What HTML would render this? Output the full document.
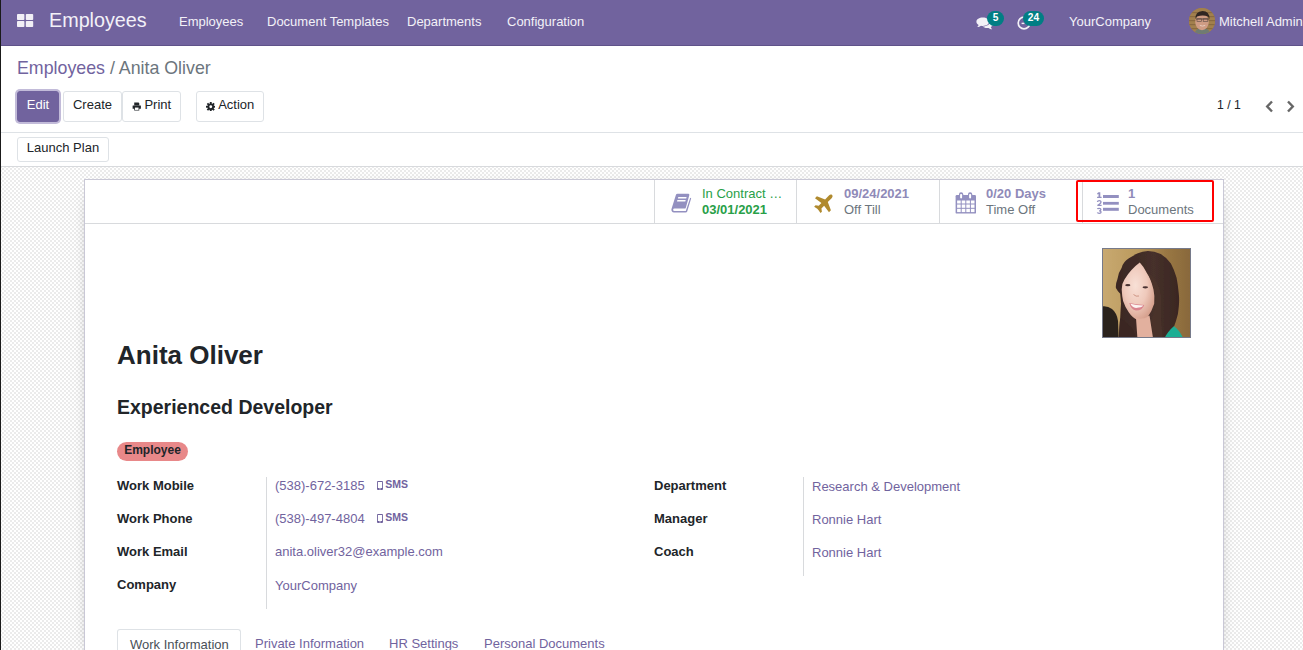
<!DOCTYPE html>
<html><head><meta charset="utf-8">
<style>
*{box-sizing:border-box;margin:0;padding:0}
html,body{width:1303px;height:650px;overflow:hidden;background:#fff}
body{font-family:"Liberation Sans",sans-serif;font-size:13px;color:#212529;position:relative}
.abs{position:absolute;white-space:nowrap}
#lb{position:absolute;left:0;top:0;width:1px;height:650px;background:#1a1a1a;z-index:50}
#nav{position:absolute;left:0;top:0;width:1303px;height:46px;background:#71639e;border-bottom:1px solid #5f5289}
#nav .t{color:#f3f1f8;position:absolute;white-space:nowrap}
#cp{position:absolute;left:0;top:46px;width:1303px;height:87px;background:#fff;border-bottom:1px solid #dee2e6}
.btn{position:absolute;height:31px;border:1px solid #dee2e6;border-radius:3px;background:#fff;color:#212529;font-size:13px;line-height:26.5px;text-align:center;white-space:nowrap}
#sb{position:absolute;left:0;top:133px;width:1303px;height:34px;background:#fff;border-bottom:1px solid #d8dadd}
#bg{position:absolute;left:0;top:167px;width:1303px;height:483px;
 background-color:#fff;
 background-image:conic-gradient(#ebebeb 25%,#fff 25% 50%,#ebebeb 50% 75%,#fff 75%);
 background-size:4px 4px;background-position:0 1px}
#sheet{position:absolute;left:84px;top:179px;width:1140px;height:480px;background:#fff;border:1px solid #c9c8d6;box-shadow:0 5px 20px -15px #000}
#bbox{position:absolute;left:0;top:0;width:1138px;height:44px;border-bottom:1px solid #d8dadd}
.stat{position:absolute;top:0;height:43px;border-left:1px solid #d8dadd}
.stat .v{position:absolute;font-weight:bold;color:#8f8ab8;font-size:13px;white-space:nowrap}
.stat .l{position:absolute;color:#6c757d;font-size:13px;white-space:nowrap}
.lbl{position:absolute;font-weight:bold;color:#212529;font-size:13px;white-space:nowrap}
.val{position:absolute;color:#71639e;font-size:13px;white-space:nowrap}
.sep{position:absolute;width:1px;background:#d8dadd}
#redbox{position:absolute;left:991px;top:0px;width:138px;height:42px;border:2px solid #f00;border-radius:2px}
#photo{position:absolute;left:1017px;top:68px;width:89px;height:90px;border:1px solid #767a8a;overflow:hidden}
#photo svg{display:block}
#tag{position:absolute;left:32px;top:262px;width:71px;height:19px;border-radius:10px;background:#e88889;color:#212529;font-weight:bold;font-size:12px;line-height:17px;text-align:center}
.sms{position:absolute;font-size:10.5px;font-weight:bold;color:#71639e;white-space:nowrap}
.sms svg{display:inline-block;vertical-align:-2.3px;margin-right:2.3px;margin-left:1px}
#tabs{position:absolute;left:0;top:449px;width:1138px;height:40px}
.tab{position:absolute;top:0;height:40px;padding:0 13px;line-height:29.5px;color:#71639e;white-space:nowrap}
.tab.act{color:#495057;border:1px solid #dee2e6;border-bottom-color:#fff;border-radius:3px 3px 0 0;padding:0 12px}
.badge{position:absolute;height:15px;border-radius:7.5px;background:#017e84;color:#fff;font-size:10.2px;font-weight:bold;line-height:13.6px;text-align:center}
</style></head><body>
<div id="lb"></div>
<div id="nav">
  <svg class="abs" style="left:17px;top:14px" width="17" height="14" viewBox="0 0 17 14">
    <rect x="0" y="0" width="7.4" height="6" rx="0.8" fill="#f1eff6"/>
    <rect x="8.8" y="0" width="7.4" height="6" rx="0.8" fill="#f1eff6"/>
    <rect x="0" y="7" width="7.4" height="6" rx="0.8" fill="#f1eff6"/>
    <rect x="8.8" y="7" width="7.4" height="6" rx="0.8" fill="#f1eff6"/>
  </svg>
  <div class="t" style="left:49px;top:9px;font-size:19.75px">Employees</div>
  <div class="t" style="left:179px;top:14px">Employees</div>
  <div class="t" style="left:267px;top:14px">Document Templates</div>
  <div class="t" style="left:407px;top:14px">Departments</div>
  <div class="t" style="left:507px;top:14px">Configuration</div>
  <svg class="abs" style="left:976px;top:17px" width="17" height="13" viewBox="0 0 17 13">
    <path d="M6.8 0.6 C10.4 0.6 13.2 2.4 13.2 4.8 C13.2 7.1 10.4 8.9 6.8 8.9 C6.2 8.9 5.6 8.8 5 8.7 C4 9.5 2.6 10 1.2 10.1 C1.9 9.5 2.4 8.8 2.6 8 C1.2 7.3 0.4 6.1 0.4 4.8 C0.4 2.4 3.2 0.6 6.8 0.6Z" fill="#f3f1f7"/>
    <path d="M14.2 3.6 C15.8 4.4 16.8 5.6 16.8 7 C16.8 8.3 16 9.4 14.8 10.1 C15 10.9 15.5 11.7 16.2 12.3 C14.8 12.2 13.5 11.7 12.6 10.9 C12.1 11 11.6 11.1 11 11.1 C9.2 11.1 7.6 10.5 6.5 9.6 C11 9.6 14.6 7.4 14.2 3.6Z" fill="#f3f1f7"/>
  </svg>
  <div class="badge" style="left:987px;top:11px;width:17px">5</div>
  <svg class="abs" style="left:1017px;top:16px" width="14" height="14" viewBox="0 0 14 14">
    <circle cx="7" cy="7" r="5.8" fill="none" stroke="#f3f1f7" stroke-width="1.7"/>
    <path d="M4.6 7.4 L7.4 7.4" fill="none" stroke="#f3f1f7" stroke-width="1.4"/>
  </svg>
  <div class="badge" style="left:1023px;top:11px;width:21px">24</div>
  <div class="abs" style="left:1189px;top:8px;width:26px;height:26px;border-radius:13px;overflow:hidden;background:#9c7a48">
    <svg width="26" height="26" viewBox="0 0 26 26">
      <rect width="26" height="26" fill="#a2804d"/>
      <g fill="#8a6a40"><rect y="4" width="26" height="1.2"/><rect y="8" width="26" height="1.2"/><rect y="12" width="26" height="1.2"/><rect y="16" width="26" height="1.2"/><rect y="20" width="26" height="1.2"/></g>
      <path d="M5 26 Q7 20 13 20 Q20 20 22 26Z" fill="#6f7b73"/>
      <ellipse cx="13" cy="14" rx="6.8" ry="8.2" fill="#cf9c84"/>
      <path d="M6.5 11 Q6 3.5 13.5 3 Q20.5 3 20.5 11 L19 8.5 Q14 6.5 8 8.5Z" fill="#2f2622"/>
      <path d="M7 11 H20.2" stroke="#4a3a34" stroke-width="0.9"/>
      <rect x="8" y="10.8" width="4.6" height="2.6" fill="none" stroke="#5a4a44" stroke-width="0.6"/>
      <rect x="14.2" y="10.8" width="4.6" height="2.6" fill="none" stroke="#5a4a44" stroke-width="0.6"/>
      <path d="M10.8 17.4 Q13.5 18.8 16.2 17.4" stroke="#e8cfc4" stroke-width="0.9" fill="none"/>
    </svg>
  </div>
  <div class="t" style="left:1069px;top:14px">YourCompany</div>
  <div class="t" style="left:1219px;top:14px">Mitchell Admin</div>
</div>
<div id="cp">
  <div class="abs" style="left:17px;top:12px;font-size:17.8px;color:#71639e">Employees <span style="color:#6c757d">/ Anita Oliver</span></div>
  <div class="btn" style="left:17px;top:45px;width:42px;background:#71639e;border-color:#71639e;color:#fff;box-shadow:0 0 0 2px #c2bbd9">Edit</div>
  <div class="btn" style="left:63px;top:45px;width:59px">Create</div>
  <div class="btn" style="left:122px;top:45px;width:59px"><svg style="display:inline-block;vertical-align:-2px;margin-right:3px" width="9.5" height="9" viewBox="0 0 10 10"><path d="M2.2 0.5 H7 L7.8 1.3 V3.6 H2.2Z M0.8 3.8 H9.2 Q9.6 3.8 9.6 4.2 V7.6 H7.8 V9.5 H2.2 V7.6 H0.4 V4.2 Q0.4 3.8 0.8 3.8Z" fill="#212529"/><rect x="3" y="6.2" width="4" height="2.6" fill="#fff"/></svg>Print</div>
  <div class="btn" style="left:196px;top:45px;width:68px"><svg style="display:inline-block;vertical-align:-2px;margin-right:3px" width="9.5" height="9.5" viewBox="0 0 10 10"><g fill="#212529"><circle cx="5" cy="5" r="3.4"/><rect x="4" y="0" width="2" height="10"/><rect x="0" y="4" width="10" height="2"/><rect x="4" y="0" width="2" height="10" transform="rotate(45 5 5)"/><rect x="4" y="0" width="2" height="10" transform="rotate(-45 5 5)"/></g><circle cx="5" cy="5" r="1.5" fill="#fff"/></svg>Action</div>
  <svg class="abs" style="left:1265px;top:54px" width="9" height="13" viewBox="0 0 9 13"><path d="M7 1.5 L2.2 6.5 L7 11.5" fill="none" stroke="#666" stroke-width="2.4"/></svg>
  <svg class="abs" style="left:1286px;top:54px" width="9" height="13" viewBox="0 0 9 13"><path d="M2 1.5 L6.8 6.5 L2 11.5" fill="none" stroke="#666" stroke-width="2.4"/></svg>
  <div class="abs" style="left:1217px;top:52px;color:#212529;font-size:12.2px">1 / 1</div>
</div>
<div id="sb">
  <div class="btn" style="left:17px;top:4px;width:92px;height:25px;line-height:19px">Launch Plan</div>
</div>
<div id="bg"></div>
<div id="sheet">
  <div id="bbox">
    <div class="stat" style="left:569px;width:143px">
      <svg class="abs" style="left:11.2px;top:8px" width="32" height="30" viewBox="0 0 32 30">
        <path d="M11.5 5.8 L22.2 5.8 Q23.6 5.8 23.3 7.2 L19.9 19.4 Q19.6 20.6 18.3 20.6 L8.6 20.6 Q7 20.6 7.1 22 Q7.2 23 8.4 23 L19.8 23 L24.2 9.8 L25.2 10.3 L21.2 23.4 Q20.8 24.4 19.6 24.4 L8 24.4 Q5.2 24.2 5.4 21.2 L9.8 7.2 Q10.2 5.8 11.5 5.8 Z" fill="#9390c0"/>
        <path d="M12.3 8.9 L20.6 8.9 L20.2 10.4 L11.9 10.4Z M11.4 12 L19.7 12 L19.3 13.4 L11 13.4Z" fill="#fff"/>
      </svg>
      <div class="abs" style="left:47px;top:5.8px;color:#28a048;font-size:13px">In Contract &#8230;</div>
      <div class="abs" style="left:47px;top:22px;color:#28a048;font-size:13px;font-weight:bold">03/01/2021</div>
    </div>
    <div class="stat" style="left:711px;width:143px">
      <svg class="abs" style="left:12px;top:8.5px" width="32" height="30" viewBox="0 0 32 30">
        <path transform="translate(14.9 14.3) rotate(45)" d="M0 -11.6 C1.2 -11.6 1.9 -10.5 1.9 -9 L1.9 -3.6 L9.9 0 L9.9 2.7 L1.9 1.6 L1.9 5.4 L4.5 7.3 L4.5 9.3 L0.8 8.6 L-0.8 8.6 L-4.5 9.3 L-4.5 7.3 L-1.9 5.4 L-1.9 1.6 L-9.9 2.7 L-9.9 0 L-1.9 -3.6 L-1.9 -9 C-1.9 -10.5 -1.2 -11.6 0 -11.6Z" fill="#b08a2e"/>
      </svg>
      <div class="abs v" style="left:47px;top:5.8px">09/24/2021</div>
      <div class="abs l" style="left:47px;top:22px">Off Till</div>
    </div>
    <div class="stat" style="left:854px;width:143px">
      <svg class="abs" style="left:15px;top:12px" width="22" height="22" viewBox="0 0 22 22">
        <rect x="0.6" y="3" width="20.4" height="18.6" rx="1.2" fill="#9390c0"/>
        <rect x="4" y="0.2" width="4.2" height="6.4" rx="2" fill="#9390c0"/>
        <rect x="13" y="0.2" width="4.2" height="6.4" rx="2" fill="#9390c0"/>
        <rect x="5.1" y="2" width="2" height="4.4" rx="0.8" fill="#fff"/>
        <rect x="14.1" y="2" width="2" height="4.4" rx="0.8" fill="#fff"/>
        <g fill="#fff">
          <rect x="2.1" y="8.5" width="3.6" height="3"/><rect x="6.7" y="8.5" width="3.6" height="3"/><rect x="11.3" y="8.5" width="3.6" height="3"/><rect x="15.9" y="8.5" width="3.6" height="3"/>
          <rect x="2.1" y="12.5" width="3.6" height="3.3"/><rect x="6.7" y="12.5" width="3.6" height="3.3"/><rect x="11.3" y="12.5" width="3.6" height="3.3"/><rect x="15.9" y="12.5" width="3.6" height="3.3"/>
          <rect x="2.1" y="16.8" width="3.6" height="3.3"/><rect x="6.7" y="16.8" width="3.6" height="3.3"/><rect x="11.3" y="16.8" width="3.6" height="3.3"/><rect x="15.9" y="16.8" width="3.6" height="3.3"/>
        </g>
      </svg>
      <div class="abs v" style="left:46px;top:5.8px">0/20 Days</div>
      <div class="abs l" style="left:46px;top:22px">Time Off</div>
    </div>
    <div class="stat" style="left:997px;width:141px">
      <svg class="abs" style="left:12px;top:12px" width="24" height="23" viewBox="0 0 24 23">
        <g fill="#9390c0">
          <rect x="8" y="3" width="15.8" height="3"/>
          <rect x="8" y="9.9" width="15.8" height="2.8"/>
          <rect x="8" y="15.8" width="15.8" height="3"/>
          <path d="M3.5 0.3 H5.3 V4.8 H6.6 V6 H2.1 V4.8 H3.5 V2 L2.2 2.6 V1.3Z"/>
        </g>
        <g fill="none" stroke="#9390c0" stroke-width="1.3">
          <path d="M2.4 10 Q2.6 8.6 4.3 8.6 Q6 8.6 6 10 Q6 11.2 4.3 12.2 L3 13 V13.3 H6.6"/>
          <path d="M2.4 17 Q2.7 16.3 4.3 16.3 Q5.9 16.3 5.9 17.6 Q5.9 18.7 4.2 18.8 Q6.1 18.9 6.1 20.1 Q6.1 21.3 4.2 21.3 Q2.7 21.3 2.3 20.5"/>
        </g>
      </svg>
      <div class="abs v" style="left:45px;top:5.8px">1</div>
      <div class="abs l" style="left:45px;top:22px">Documents</div>
    </div>
  </div>
  <div id="redbox"></div>
  <div id="photo">
    <svg width="88" height="89" viewBox="0 0 88 89">
      <defs>
        <linearGradient id="bgg" x1="0" y1="0" x2="1" y2="0">
          <stop offset="0" stop-color="#c9aa72"/><stop offset="0.4" stop-color="#bb9a5e"/><stop offset="0.7" stop-color="#9a7844"/><stop offset="1" stop-color="#86663a"/>
        </linearGradient>
        <radialGradient id="face" cx="0.42" cy="0.4" r="0.65">
          <stop offset="0" stop-color="#f8e0d6"/><stop offset="0.55" stop-color="#efc9bb"/><stop offset="1" stop-color="#d59f8c"/>
        </radialGradient>
        <linearGradient id="hair" x1="0" y1="0" x2="1" y2="0">
          <stop offset="0" stop-color="#3a2723"/><stop offset="0.6" stop-color="#46302a"/><stop offset="1" stop-color="#3a2722"/>
        </linearGradient>
        <filter id="bl" filterUnits="userSpaceOnUse" x="-5" y="-5" width="98" height="99"><feGaussianBlur stdDeviation="0.6"/></filter>
      </defs>
      <g filter="url(#bl)">
      <rect x="-3" y="-3" width="94" height="95" fill="url(#bgg)"/>
      <path d="M-3 57.7 Q4 56 9 60 Q14 64 15 72 L15.8 92 L-3 92Z" fill="#2a211e"/>
      <path d="M44.7 2.1 Q34 3 25.9 9.3 Q20 13 18.7 18.7 Q15 24 14.4 30.3 Q12.5 35 12.9 38.9 Q14.5 42 17.2 44.7 Q17.8 50 18 54.8 Q17.5 62 17.2 69.3 Q16 78 15.8 92 L65 92 Q67 85 69.3 80.9 Q71.5 77 72.9 72.2 Q75.5 65 75.8 57.7 Q76.5 51 75.8 44.7 Q75 36 73.6 28.8 Q71 20 67.9 14.4 Q63 8 57.7 5 Q51 2 44.7 2.1Z" fill="url(#hair)"/>
      <path d="M36.8 13.6 Q28 20 21.6 30.3 Q18.5 35 18.7 40.4 Q19 47 20.1 52 Q22 58 25.9 63.5 Q29.5 69 34.6 70.8 Q40 71 44.7 67.9 Q49 62 51.2 54.8 Q52 47 50.5 40.4 Q48 30 43.3 23 Q40 17 36.8 13.6Z" fill="url(#face)"/>
      <path d="M33 69 Q39 71.5 46.5 66.5 L50.5 92 L34.6 92Z" fill="#e2b09e"/>
      <path d="M17.2 69.3 Q22 72 30 80 L34 92 L15.8 92Z" fill="#3a2723"/>
      <path d="M43.3 23 Q50 32 52.5 46 Q54 60 48 72 L52 92 L60 92 Q57 70 58 50 Q57 32 43.3 23Z" fill="#4e352d" opacity="0.6"/>
      <path d="M60.6 92 Q63 84 70.8 77.3 Q76 80 81.6 92Z" fill="#1fae94"/>
      <ellipse cx="24.8" cy="36.2" rx="2.6" ry="1.1" fill="#4a3232"/>
      <ellipse cx="42.3" cy="38.3" rx="2.8" ry="1.1" fill="#4a3232"/>
      <path d="M26.3 54 Q33 55.6 41.2 56 Q39.5 61.5 33 61.6 Q27.8 60.5 26.3 54Z" fill="#d9838e"/>
      <path d="M27.4 54.8 Q33 56.3 40.3 56.6 Q38.8 58.8 33 58.9 Q28.8 58.4 27.4 54.8Z" fill="#fcf4f1"/>
      <path d="M30.5 45.5 Q33 48 36 47" stroke="#c98e7e" stroke-width="0.9" fill="none"/>
      </g>
    </svg>
  </div>
  <div class="abs" style="left:32px;top:160px;font-size:26px;font-weight:bold;color:#212529">Anita Oliver</div>
  <div class="abs" style="left:32px;top:215.7px;font-size:19.5px;font-weight:bold;color:#212529">Experienced Developer</div>
  <div id="tag">Employee</div>

  <div class="lbl" style="left:32px;top:298px">Work Mobile</div>
  <div class="lbl" style="left:32px;top:331px">Work Phone</div>
  <div class="lbl" style="left:32px;top:364px">Work Email</div>
  <div class="lbl" style="left:32px;top:397px">Company</div>
  <div class="sep" style="left:181px;top:297px;height:132px"></div>
  <div class="val" style="left:190px;top:298px">(538)-672-3185</div>
  <div class="val" style="left:190px;top:331px">(538)-497-4804</div>
  <div class="val" style="left:190px;top:364px">anita.oliver32@example.com</div>
  <div class="val" style="left:190px;top:398px">YourCompany</div>
  <div class="sms" style="left:291px;top:298px"><svg width="6" height="9" viewBox="0 0 6 9"><path d="M1 0 H5 Q6 0 6 1 V8 Q6 9 5 9 H1 Q0 9 0 8 V1 Q0 0 1 0Z M0.9 1 V7 H5.1 V1Z" fill="#71639e" fill-rule="evenodd"/><rect x="2.4" y="7.4" width="1.2" height="1" fill="#fff"/></svg>SMS</div>
  <div class="sms" style="left:291px;top:331px"><svg width="6" height="9" viewBox="0 0 6 9"><path d="M1 0 H5 Q6 0 6 1 V8 Q6 9 5 9 H1 Q0 9 0 8 V1 Q0 0 1 0Z M0.9 1 V7 H5.1 V1Z" fill="#71639e" fill-rule="evenodd"/><rect x="2.4" y="7.4" width="1.2" height="1" fill="#fff"/></svg>SMS</div>

  <div class="lbl" style="left:569px;top:298px">Department</div>
  <div class="lbl" style="left:569px;top:331px">Manager</div>
  <div class="lbl" style="left:569px;top:364px">Coach</div>
  <div class="sep" style="left:718px;top:297px;height:99px"></div>
  <div class="val" style="left:727px;top:299px">Research &amp; Development</div>
  <div class="val" style="left:727px;top:332px">Ronnie Hart</div>
  <div class="val" style="left:727px;top:365px">Ronnie Hart</div>

  <div id="tabs">
    <div class="tab act" style="left:32px;width:124px">Work Information</div>
    <div class="tab" style="left:157px">Private Information</div>
    <div class="tab" style="left:291px">HR Settings</div>
    <div class="tab" style="left:386px">Personal Documents</div>
  </div>
</div>
</body></html>
